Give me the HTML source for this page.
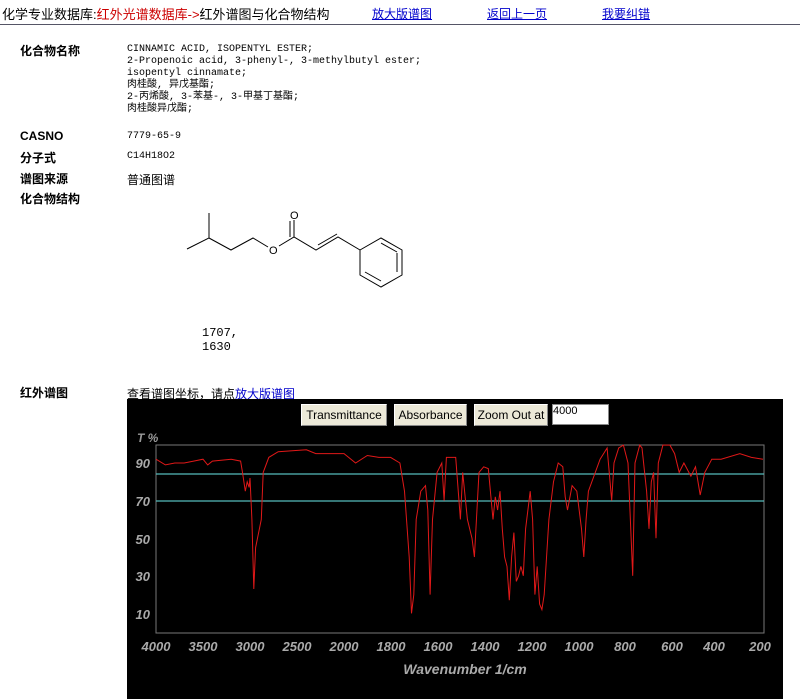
<!DOCTYPE html>
<html><head><meta charset="utf-8"><style>
body{margin:0;width:800px;height:699px;background:#fff;font-family:"Liberation Sans","Noto Sans CJK SC",sans-serif;font-size:12px;color:#000;position:relative;overflow:hidden}
.a{position:absolute;white-space:nowrap}
.lbl{font-weight:bold;font-size:12px}
.m{font-family:"Liberation Mono","Noto Sans CJK SC",monospace;font-size:10px;line-height:12px}
a{color:#00c;text-decoration:underline}
.btn{position:absolute;top:404px;height:20px;background:#ece9d8;border:1px solid #fff;border-right-color:#888;border-bottom-color:#888;font-size:12px;line-height:20px;text-align:center}
</style></head><body>
<div class="a" style="left:2px;top:4px;font-size:13px">化学专业数据库:<span style="color:#c00">红外光谱数据库-&gt;</span>红外谱图与化合物结构</div>
<div class="a" style="left:372px;top:5px"><a>放大版谱图</a></div>
<div class="a" style="left:487px;top:5px"><a>返回上一页</a></div>
<div class="a" style="left:602px;top:5px"><a>我要纠错</a></div>
<div class="a" style="left:0;top:24px;width:800px;height:1px;background:#556"></div>

<div class="a lbl" style="left:20px;top:42px">化合物名称</div>
<div class="a m" style="left:127px;top:44px">CINNAMIC ACID, ISOPENTYL ESTER;<br>2-Propenoic acid, 3-phenyl-, 3-methylbutyl ester;<br>isopentyl cinnamate;<br>肉桂酸, 异戊基酯;<br>2-丙烯酸, 3-苯基-, 3-甲基丁基酯;<br>肉桂酸异戊酯;</div>
<div class="a lbl" style="left:20px;top:129px">CASNO</div>
<div class="a m" style="left:127px;top:131px">7779-65-9</div>
<div class="a lbl" style="left:20px;top:149px">分子式</div>
<div class="a m" style="left:127px;top:151px">C14H18O2</div>
<div class="a lbl" style="left:20px;top:170px">谱图来源</div>
<div class="a" style="left:127px;top:171px">普通图谱</div>
<div class="a lbl" style="left:20px;top:190px">化合物结构</div>
<svg class="a" style="left:0;top:0" width="800" height="300">
<g stroke="#000" stroke-width="1" fill="none">
<polyline points="187,249 209,238 209,213"/>
<polyline points="209,238 231,250 253,238 268,247"/>
<polyline points="279,246 294,237 316,250 338,237 360,250"/>
<line x1="294" y1="237" x2="294" y2="220"/><line x1="290" y1="237" x2="290" y2="221"/>
<line x1="318" y1="245" x2="337" y2="234"/>
<polygon points="360,250 381,238 402,250 402,275 381,287 360,275"/>
<line x1="397" y1="253" x2="397" y2="272"/><line x1="381" y1="243" x2="397" y2="252"/><line x1="365" y1="272" x2="381" y2="281"/>
</g>
<text x="269" y="254" font-size="11" font-family="Liberation Sans">O</text>
<text x="290" y="219" font-size="11" font-family="Liberation Sans">O</text>
</svg>
<div class="a m" style="left:202px;top:326px;font-size:12px;line-height:14px">1707,<br>1630</div>

<div class="a lbl" style="left:20px;top:384px">红外谱图</div>
<div class="a" style="left:127px;top:385px">查看谱图坐标，请点<a>放大版谱图</a></div>
<div class="a" style="left:127px;top:399px;width:656px;height:300px;background:#000"></div>
<div class="btn" style="left:301px;width:84px">Transmittance</div>
<div class="btn" style="left:394px;width:71px">Absorbance</div>
<div class="btn" style="left:474px;width:72px">Zoom Out at</div>
<div class="a" style="left:552px;top:404px;width:55px;height:19px;background:#fff;border:1px solid #888;font-size:11px;line-height:13px">4000</div>
<svg class="a" style="left:0;top:0" width="800" height="699" font-family="Liberation Sans" font-style="italic" font-weight="bold" fill="#aaa">
<rect x="156" y="445" width="608" height="188" fill="none" stroke="#777"/>
<line x1="156" y1="474" x2="764" y2="474" stroke="#5bb" stroke-width="1.2"/>
<line x1="156" y1="501" x2="764" y2="501" stroke="#5bb" stroke-width="1.2"/>
<text x="137" y="442" font-size="12" fill="#999">T %</text>
<g font-size="13" text-anchor="end"><text x="150" y="468">90</text><text x="150" y="506">70</text><text x="150" y="544">50</text><text x="150" y="581">30</text><text x="150" y="619">10</text></g>
<g font-size="13" text-anchor="middle"><text x="156" y="651">4000</text><text x="203" y="651">3500</text><text x="250" y="651">3000</text><text x="297" y="651">2500</text><text x="344" y="651">2000</text><text x="391" y="651">1800</text><text x="438" y="651">1600</text><text x="485" y="651">1400</text><text x="532" y="651">1200</text><text x="579" y="651">1000</text><text x="625" y="651">800</text><text x="672" y="651">600</text><text x="714" y="651">400</text><text x="760" y="651">200</text></g>
<text x="465" y="674" font-size="14" text-anchor="middle">Wavenumber 1/cm</text>
<polyline id="sp" fill="none" stroke="#e01818" stroke-width="1" points=""/>
</svg>
<script>
var d=[4000,92,3900,89,3800,90,3700,90,3600,91,3500,92,3450,89,3400,91,3200,92,3100,91,3080,85,3050,75,3030,80,3010,77,3000,82,2980,60,2960,23,2940,45,2900,55,2880,60,2860,85,2800,93,2700,96,2400,97,2300,95,2050,95,2000,95,1950,90,1900,94,1850,93,1800,93,1760,90,1740,75,1720,40,1710,10,1700,20,1690,60,1670,75,1650,78,1640,65,1630,20,1620,60,1600,85,1580,90,1570,70,1560,93,1520,93,1500,60,1490,85,1470,60,1450,50,1440,40,1420,85,1400,88,1380,87,1360,60,1350,72,1340,65,1330,75,1320,55,1310,40,1300,35,1290,17,1280,40,1270,53,1260,27,1250,30,1240,35,1230,30,1220,55,1200,75,1190,60,1180,20,1170,35,1160,15,1150,12,1140,20,1120,60,1100,80,1080,90,1060,88,1050,72,1040,65,1020,78,1000,75,980,55,970,40,960,60,950,75,900,92,870,98,850,70,840,90,820,98,800,100,780,90,760,30,750,90,730,100,720,98,700,75,690,55,680,80,670,85,660,50,650,90,630,100,600,100,580,95,560,85,540,90,510,83,490,88,470,73,450,85,420,92,380,92,300,95,250,93,200,92];
var p=[];for(var i=0;i<d.length;i+=2){var w=d[i],t=Math.min(d[i+1],99.5);var x=w>=2000?156+(4000-w)*0.094:344+(2000-w)*0.2328;p.push(x.toFixed(1)+","+(463+(90-t)*1.88).toFixed(1));}
document.getElementById("sp").setAttribute("points",p.join(" "));
</script>
</body></html>
